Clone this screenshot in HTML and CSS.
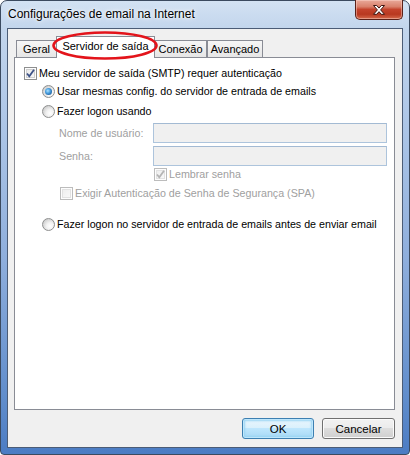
FILE: index.html
```html
<!DOCTYPE html>
<html lang="pt-BR">
<head>
<meta charset="utf-8">
<title>Configurações de email na Internet</title>
<link rel="stylesheet" href="styles.css">
</head>
<body>
<div class="window">
  <div class="titlebar">
    <span class="title">Configurações de email na Internet</span>
    <div class="close">
      <svg width="46" height="18" viewBox="0 0 46 18"><path d="M17.5 4.5 h3.2 l2.3 2.6 l2.3 -2.6 h3.2 l-3.9 4.4 l3.9 4.4 h-3.2 l-2.3 -2.6 l-2.3 2.6 h-3.2 l3.9 -4.4 z" fill="#fff" stroke="#3b1410" stroke-width="1" stroke-linejoin="round"/></svg>
    </div>
  </div>
  <div class="frame">
    <div class="client">
      <div class="tabs">
        <div class="tab t-geral">Geral</div>
        <div class="tab selected t-serv">Servidor de saída</div>
        <div class="tab t-con">Conexão</div>
        <div class="tab t-av">Avançado</div>
      </div>
      <div class="panel">
        <div class="row r1">
          <span class="chk checked"><svg width="11" height="11" viewBox="0 0 11 11"><path d="M2 5.5 L4.3 8.3 L9 1.8" fill="none" stroke="#3d5287" stroke-width="1.8"/></svg></span>
          <span class="lbl">Meu servidor de saída (SMTP) requer autenticação</span>
        </div>
        <div class="row r2 ind1">
          <span class="radio on"><span class="dot"></span></span>
          <span class="lbl">Usar mesmas config. do servidor de entrada de emails</span>
        </div>
        <div class="row r3 ind1">
          <span class="radio"></span>
          <span class="lbl">Fazer logon usando</span>
        </div>
        <div class="field f1">
          <span class="flabel">Nome de usuário:</span>
          <span class="input"></span>
        </div>
        <div class="field f2">
          <span class="flabel">Senha:</span>
          <span class="input"></span>
        </div>
        <div class="row r4 ind3">
          <span class="chk checked disabled"><svg width="11" height="11" viewBox="0 0 11 11"><path d="M2 5.5 L4.3 8.3 L9 1.8" fill="none" stroke="#b4b4b4" stroke-width="1.8"/></svg></span>
          <span class="lbl dis">Lembrar senha</span>
        </div>
        <div class="row r5 ind2">
          <span class="chk disabled"></span>
          <span class="lbl dis">Exigir Autenticação de Senha de Segurança (SPA)</span>
        </div>
        <div class="row r6 ind1">
          <span class="radio"></span>
          <span class="lbl">Fazer logon no servidor de entrada de emails antes de enviar email</span>
        </div>
      </div>
      <div class="buttons">
        <button class="btn default">OK</button>
        <button class="btn">Cancelar</button>
      </div>
    </div>
  </div>
  <svg class="annot" width="410" height="455" viewBox="0 0 410 455"><ellipse cx="105" cy="45.5" rx="51.5" ry="13" fill="none" stroke="#e3141b" stroke-width="2.6"/></svg>
</div>
</body>
</html>
```
FILE: styles.css
```css
* { box-sizing: border-box; }
html, body { margin: 0; padding: 0; }
body {
  width: 410px;
  height: 455px;
  overflow: hidden;
  background: #fff;
  font-family: "Liberation Sans", Arial, sans-serif;
  font-size: 10.7px;
  color: #000;
}
.window {
  position: relative;
  width: 410px;
  height: 455px;
  border: 1px solid #3b4a5f;
  border-radius: 7px 7px 4px 4px;
  background: linear-gradient(to bottom, #d3e2f3 0, #c2d5ec 28px, #b0c8e8 110px, #8eaedc 260px, #5f8ccb 400px, #4a7bc3 455px);
  display: flex;
  flex-direction: column;
}
.titlebar {
  height: 27px;
  display: flex;
  align-items: flex-start;
  padding: 0 6px 0 7px;
}
.title {
  margin-top: 5px;
  font-size: 12px;
  line-height: 16px;
  color: #000;
  text-shadow: 0 0 6px #fff, 0 0 3px #fff;
}
.close {
  margin-left: auto;
  margin-top: -1px;
  width: 48px;
  height: 20px;
  border: 1px solid #5a2119;
  border-top: none;
  border-radius: 0 0 5px 5px;
  background: linear-gradient(to bottom, #e9a99a 0, #d9816c 35%, #c4432c 50%, #b83820 75%, #d56a4c 100%);
  box-shadow: inset 0 0 0 1px rgba(255,220,210,0.45);
  display: flex;
  align-items: center;
  justify-content: center;
}
.close svg { display: block; }
.frame {
  flex: 1;
  margin: 0 6px 6px 6px;
  border: 1px solid #4b5c76;
  display: flex;
}
.client {
  flex: 1;
  background: #f0f0f0;
  display: flex;
  flex-direction: column;
}
.tabs {
  display: flex;
  align-items: flex-end;
  height: 21px;
  margin: 7px 0 0 8px;
  font-size: 11px;
}
.tab {
  height: 17px;
  border: 1px solid #898c95;
  border-bottom: none;
  background: linear-gradient(to bottom, #f6f6f6, #e6e6e6);
  line-height: 15px;
  text-align: center;
  padding-top: 1px;
}
.t-geral { width: 40px; border-right: none; }
.t-serv { width: 99px; }
.t-con { width: 52px; border-left: none; }
.t-av { width: 56px; border-left: 1px solid #898c95; }
.tab.selected {
  height: 22px;
  margin-bottom: -1px;
  background: #fff;
  position: relative;
  z-index: 2;
  padding-top: 2px;
}
.panel {
  height: 353px;
  margin: 0 7px 0 6px;
  border: 1px solid #898c95;
  background: #fff;
  padding: 9px 0 0 9px;
  display: flex;
  flex-direction: column;
}
.row {
  display: flex;
  align-items: center;
  height: 13px;
  line-height: 13px;
  white-space: nowrap;
}
.r2 { margin-top: 5px; }
.r3 { margin-top: 7px; }
.f1 { margin-top: 5px; }
.f2 { margin-top: 3px; }
.r4 { margin-top: 2px; }
.r5 { margin-top: 6px; }
.r6 { margin-top: 18px; }
.ind1 { padding-left: 18px; }
.ind2 { padding-left: 36px; }
.ind3 { padding-left: 130px; }
.lbl { margin-left: 2px; }
.dis { color: #a0a0a0; }
.chk {
  width: 13px;
  height: 13px;
  flex: none;
  border: 1px solid #8e8f8f;
  background: #f4f4f4;
  display: flex;
  align-items: center;
  justify-content: center;
  box-shadow: inset 0 0 0 1px #fdfdfd, inset 0 0 0 2px #cfcfcf;
  background-image: linear-gradient(135deg, #dcdcdc, #f9f9f9);
}
.chk.checked { background-image: linear-gradient(135deg, #e6e6e6, #fbfbfb); }
.chk svg { display: block; }
.chk.disabled {
  border-color: #bcbcbc;
  box-shadow: inset 0 0 0 1px #fdfdfd, inset 0 0 0 2px #e2e2e2;
  background-image: linear-gradient(135deg, #ececec, #fbfbfb);
}
.radio {
  width: 13px;
  height: 13px;
  flex: none;
  border-radius: 50%;
  border: 1px solid #8e8f8f;
  background: radial-gradient(circle at 65% 65%, #ffffff 0, #f2f2f2 35%, #d0d0d0 75%, #c4c4c4 100%);
  display: flex;
  align-items: center;
  justify-content: center;
}
.dot {
  width: 7px;
  height: 7px;
  border-radius: 50%;
  background: radial-gradient(circle at 40% 40%, #aee2ff 0, #4aa0e0 40%, #1d5d9b 80%, #194d80 100%);
}
.field {
  display: flex;
  align-items: center;
  height: 20px;
  white-space: nowrap;
}
.flabel {
  width: 129px;
  padding-left: 35px;
  color: #a0a0a0;
}
.input {
  width: 234px;
  height: 20px;
  border: 1px solid #adc4dc;
  border-top-color: #a3bad3;
  background: #f0f0f0;
}
.buttons {
  display: flex;
  justify-content: flex-end;
  gap: 8px;
  margin: 8px 7px 0 0;
}
.btn {
  height: 21px;
  width: 73px;
  padding: 0;
  font-family: "Liberation Sans", Arial, sans-serif;
  font-size: 11.5px;
  color: #000;
  border: 1px solid #707070;
  border-radius: 3px;
  background: linear-gradient(to bottom, #f2f2f2 0, #ebebeb 50%, #dddddd 50%, #cfcfcf 100%);
  box-shadow: inset 0 0 0 1px #fbfbfb;
}
.btn.default {
  width: 72px;
  border-color: #3c7fb1;
  background: linear-gradient(to bottom, #eaf6fd 0, #d9f0fc 50%, #bee6fd 50%, #a7d9f5 100%);
  box-shadow: inset 0 0 0 1px #bfe7fc, inset 0 0 2px 2px #9ad4f3;
}
.annot {
  position: absolute;
  left: -1px;
  top: -1px;
  z-index: 10;
  pointer-events: none;
}
```
